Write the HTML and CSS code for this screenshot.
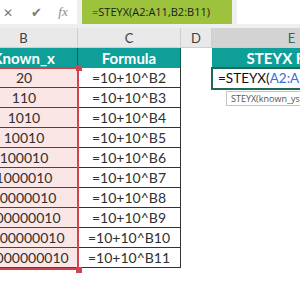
FILE: index.html
```html
<!DOCTYPE html>
<html lang="en">
<head>
  <meta charset="utf-8"/>
  <title>STEYX</title>
  <link rel="stylesheet" href="styles.css">
</head>
<body>

<div class="formula-bar">
  <div class="bar-icons">
    <span class="ico">&#x2715;</span>
    <span class="ico">&#x2714;</span>
    <span class="ico fx">fx</span>
  </div>
  <div class="bar-input">=STEYX(A2:A11,B2:B11)</div>
  <div class="bar-rest"></div>
</div>

<div class="sheet">
  <div class="colhead">B</div>
  <div class="colhead">C</div>
  <div class="colhead">D</div>
  <div class="colhead sel">E</div>

  <div class="cell head col-b">Known_x</div>
  <div class="cell head">Formula</div>
  <div class="cell blank"></div>
  <div class="cell head col-e">STEYX Result</div>
</div>
<div class="sheet" id="rows"></div>

<div class="editor">=STEYX(<span class="ref">A2:A11</span>,B2:B11)</div>
<div class="tip">STEYX(known_ys, known_x's)</div>
<div class="ref-box">
  <span class="handle top"></span>
  <span class="handle bottom"></span>
</div>

<script>
  const rows = document.getElementById('rows');
  for (let i = 1; i <= 10; i++) {
    const v = 10 + Math.pow(10, i);
    rows.innerHTML += `<div class="cell val">${v}</div><div class="cell frm">=10+10^B${i + 1}</div><div class="cell blank"></div><div class="cell blank"></div>`;
  }
</script>

</body>
</html>
```

FILE: styles.css
```css
body {
  margin: 0;
  width: 300px;
  height: 300px;
  overflow: hidden;
  position: relative;
  background: #fff;
  font-family: Lato, 'Liberation Sans', sans-serif;
}

.formula-bar {
  display: flex;
  height: 24px;
  gap: 5px;
  background: #efefef;
  padding-bottom: 4px;
}

.bar-icons {
  width: 77px;
  background: #fff;
  display: flex;
  align-items: center;
  color: #7a7a7a;
  font-size: 13px;
}

.ico {
  width: 26px;
  text-align: center;
}

.ico:first-child {
  width: 16px;
  font-size: 12px;
}

.ico:nth-child(2) {
  margin-left: 6px;
  width: 28px;
}

.ico.fx {
  font-family: 'Liberation Serif', serif;
  font-style: italic;
  font-size: 13px;
  color: #8a8a8a;
}

.bar-input {
  width: 140px;
  background: #9dc23b;
  color: #1c1c1c;
  font-family: 'Open Sans', sans-serif;
  font-size: 11px;
  line-height: 24px;
  padding-left: 10px;
}

.bar-rest {
  flex: 1;
  background: #fff;
}

.sheet {
  display: grid;
  grid-template-columns: 108px 103px 31px 160px;
  grid-auto-rows: 20px;
  margin-left: -30px;
}

.colhead {
  background: #e9e9e9;
  border-right: 1px solid #cfcfcf;
  border-bottom: 1px solid #cfcfcf;
  color: #404040;
  font-size: 13px;
  text-align: center;
  line-height: 21px;
}

.colhead.sel {
  background: #d3d3d3;
  color: #2d6a5e;
}

.cell {
  box-sizing: border-box;
  text-align: center;
  font-size: 14px;
  line-height: 20px;
  color: #303030;
  white-space: nowrap;
  overflow: hidden;
}

.head {
  background: #0f9f99;
  color: #fff;
  font-weight: bold;
  font-size: 15px;
  border-right: 1px solid #0b5e5a;
}

.col-e {
  border-right: none;
}

.val {
  background: #fbe6e6;
  border-bottom: 1px solid #474747;
}

.frm {
  border-bottom: 1px solid #333;
  border-right: 1px solid #333;
}

.blank {
  background: #fff;
}

.editor {
  position: absolute;
  left: 211px;
  top: 67px;
  width: 100px;
  height: 19px;
  border: 2px solid #1e6a57;
  background: #fff;
  font-size: 13.5px;
  line-height: 19px;
  padding-left: 5px;
  white-space: nowrap;
  color: #111;
}

.ref {
  color: #3a6fd8;
}

.tip {
  position: absolute;
  left: 226px;
  top: 91px;
  width: 100px;
  height: 13px;
  border: 1px solid #c4c4c4;
  background: #fff;
  font-family: 'Open Sans', sans-serif;
  font-size: 9px;
  line-height: 13px;
  padding-left: 4px;
  color: #555;
  white-space: nowrap;
}

.ref-box {
  position: absolute;
  left: -10px;
  top: 67px;
  width: 87px;
  height: 199px;
  border: 2px solid #d0434f;
  border-left: none;
}

.handle {
  position: absolute;
  right: -5px;
  width: 6px;
  height: 6px;
  background: #d0434f;
}

.handle.top {
  top: -4px;
}

.handle.bottom {
  bottom: -5px;
}
```
